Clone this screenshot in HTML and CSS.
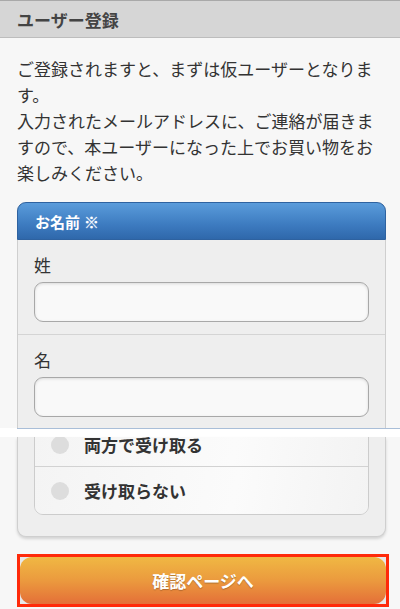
FILE: index.html
```html
<!DOCTYPE html>
<html lang="ja">
<head>
<meta charset="utf-8">
<title>ユーザー登録</title>
<link rel="stylesheet" href="styles.css">
</head>
<body>
<header class="page-header"><h1 class="page-title">ユーザー登録</h1></header>
<main class="main">
  <p class="intro">ご登録されますと、まずは仮ユーザーとなります。<br>入力されたメールアドレスに、ご連絡が届きますので、本ユーザーになった上でお買い物をお楽しみください。</p>

  <section class="panel panel-top">
    <div class="panel-head">お名前 <span class="req">※</span></div>
    <div class="field">
      <label class="field-label">姓</label>
      <div class="input"></div>
    </div>
    <div class="field field-last">
      <label class="field-label">名</label>
      <div class="input"></div>
    </div>
  </section>

  <div class="seam"></div>

  <section class="panel panel-bottom">
    <div class="radio-list">
      <div class="radio-row"><span class="radio"></span><span class="radio-text">両方で受け取る</span></div>
      <div class="radio-row"><span class="radio"></span><span class="radio-text">受け取らない</span></div>
    </div>
  </section>

  <div class="btn-frame"><div class="btn">確認ページへ</div></div>
</main>
</body>
</html>
```

FILE: styles.css
```css
* { box-sizing: border-box; }
html, body { margin: 0; padding: 0; }
body {
  background: #f7f7f7;
  font-family: "Noto Sans CJK JP", "Noto Sans", sans-serif;
  color: #333;
  overflow: hidden;
}
.page-header {
  height: 38px;
  background: #d6d6d6;
  border-top: 1px solid #a9a9a9;
  border-bottom: 1px solid #bdbdbd;
  display: flex;
  align-items: center;
  padding-left: 17px;
}
.page-title {
  margin: 0;
  font-size: 17px;
  font-weight: bold;
  color: #444;
  line-height: 1;
}
.main { padding: 0 14px 0 17px; }
.intro {
  margin: 18px 0 16px;
  font-size: 17px;
  line-height: 26px;
  color: #333;
}
.panel {
  background: #eeeeee;
  border-left: 1px solid #cfcfcf;
  border-right: 1px solid #cfcfcf;
}
.panel-top { border-radius: 9px 9px 0 0; }
.panel-head {
  height: 38px;
  margin: 0 -1px;
  border-radius: 9px 9px 0 0;
  background: linear-gradient(#5a9cdb, #3d7bc0 60%, #2f68ab);
  border: 1px solid #2e62a0;
  color: #fff;
  font-weight: bold;
  font-size: 15px;
  display: flex;
  align-items: center;
  padding-left: 17px;
  gap: 4px;
}
.req { font-size: 15px; font-weight: bold; color: #fff; text-shadow: 0 0 1px #fff; }
.field {
  padding: 14px 16px 12px;
  border-bottom: 1px solid #d4d4d4;
}
.field-last { border-bottom: none; padding-bottom: 11px; }
.field-label {
  display: block;
  font-size: 17px;
  line-height: 22px;
  margin-bottom: 6px;
  color: #333;
}
.input {
  height: 40px;
  border: 1px solid #a8a8a8;
  border-radius: 9px;
  background: #f9f9f9;
  box-shadow: inset 0 1px 3px rgba(0,0,0,.12);
}
.seam {
  height: 9px;
  margin: 0 -14px 0 -17px;
  background: #fff;
}
.seam::before {
  content: "";
  display: block;
  height: 1px;
  margin-left: 17px;
  background: #a9bed8;
}
.panel-bottom {
  border-bottom: 1px solid #cfcfcf;
  border-radius: 0 0 9px 9px;
  box-shadow: 0 2px 3px rgba(0,0,0,.15);
  padding: 0 16px 21px;
  overflow: hidden;
}
.radio-list {
  margin-top: -15px;
  border: 1px solid #cccccc;
  border-radius: 9px;
  overflow: hidden;
}
.radio-row {
  height: 44px;
  display: flex;
  align-items: center;
  padding-left: 16px;
  gap: 15px;
  background: linear-gradient(100deg, #f4f4f4, #fbfbfb 60%, #f3f3f3);
  border-bottom: 1px solid #d2d2d2;
}
.radio-row:last-child { border-bottom: none; height: 47px; }
.radio {
  width: 18px;
  height: 18px;
  border-radius: 50%;
  background: #dddddd;
  flex: none;
}
.radio-text {
  font-size: 17px;
  line-height: 18px;
  font-weight: bold;
  color: #333;
}
.btn-frame {
  margin-top: 17px;
  margin-right: -3px;
  border: 3px solid #ff2a0a;
  background: #e8e8e8;
}
.btn {
  height: 47px;
  border-radius: 12px;
  background: linear-gradient(#f0b843, #eb9a3e 50%, #e46f38);
  color: #fff;
  font-weight: bold;
  font-size: 17px;
  display: flex;
  align-items: center;
  justify-content: center;
  text-shadow: 0 1px 1px rgba(0,0,0,.25);
}
```
